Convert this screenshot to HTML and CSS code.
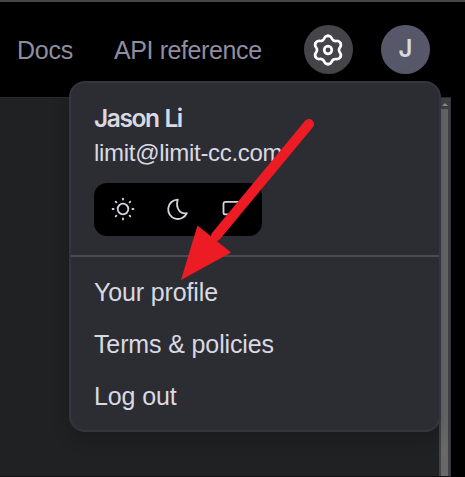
FILE: index.html
```html
<!DOCTYPE html>
<html lang="en">
<head>
<meta charset="utf-8">
<title>Account menu</title>
<link rel="stylesheet" href="styles.css">
</head>
<body>
<header class="topbar">
  <nav class="links">
    <a class="docs">Docs</a>
    <a class="api">API reference</a>
  </nav>
  <button class="round settings" aria-label="Settings">
    <svg width="33" height="34" viewBox="0 0 33 34" fill="none" stroke="#fff" stroke-width="2.7" stroke-linecap="round">
      <path id="tooth" d="M16 2.8C20.4 2.8 18.6 5.8 21.5 7.5C24.4 9.2 26.1 6.1 28.3 9.9"/>
      <use href="#tooth" transform="rotate(60 16 17)"/>
      <use href="#tooth" transform="rotate(120 16 17)"/>
      <use href="#tooth" transform="rotate(180 16 17)"/>
      <use href="#tooth" transform="rotate(240 16 17)"/>
      <use href="#tooth" transform="rotate(300 16 17)"/>
      <circle cx="16" cy="17" r="3.8"/>
    </svg>
  </button>
  <div class="round avatar">J</div>
</header>
<main class="panel">
  <div class="scrollbar"><span class="up"></span><span class="thumb"></span></div>
</main>
<section class="menu">
  <div class="account">
    <div class="name">Jason Li</div>
    <div class="email">limit@limit-cc.com</div>
    <div class="themes">
      <svg width="24" height="24" viewBox="0 0 24 24" fill="none" stroke="#d5d4e0" stroke-width="1.8" stroke-linecap="round">
        <circle cx="12" cy="12" r="5.3"/>
        <path d="M12 1.6v1M12 21.4v1M1.6 12h1M21.4 12h1M4.7 4.7l.7.7M18.6 18.6l.7.7M4.7 19.3l.7-.7M18.6 5.4l.7-.7"/>
      </svg>
      <svg width="24" height="24" viewBox="0 0 24 24" fill="none" stroke="#d5d4e0" stroke-width="1.8" stroke-linejoin="round">
        <path d="M11.8 2.6A9.7 9.7 0 1 0 20.8 16.1C15 17.6 9 12 11.8 2.6Z"/>
      </svg>
      <svg width="24" height="24" viewBox="0 0 24 24" fill="none" stroke="#d5d4e0" stroke-width="1.8" stroke-linecap="round">
        <path d="M19 4.8H4.5Q2.5 4.8 2.5 6.8V15.4Q2.5 17.4 4.5 17.4H10"/>
      </svg>
    </div>
  </div>
  <ul class="actions">
    <li class="profile">Your profile</li>
    <li class="terms">Terms &amp; policies</li>
    <li class="logout">Log out</li>
  </ul>
</section>
<svg class="arrow" width="140" height="166" viewBox="0 0 140 166">
  <path d="M129 9L36 121" stroke="#ed1c24" stroke-width="10" stroke-linecap="round"/>
  <path d="M1 165L17.5 110.5L51 137.5Z" fill="#ed1c24"/>
</svg>
</body>
</html>
```
FILE: styles.css
```css
* { box-sizing: border-box; }
body {
  margin: 0;
  width: 465px;
  height: 477px;
  overflow: hidden;
  position: relative;
  background: #000;
  font-family: "Liberation Sans", Arial, sans-serif;
  font-size: 25px;
  color: #d9d9e3;
}
.topbar {
  height: 97px;
  border-top: 2px solid #43464a;
  padding: 0 35px 0 17px;
  display: flex;
  align-items: center;
}
.links {
  display: flex;
  gap: 41px;
  color: #8e8ea0;
  flex: 1;
  padding-top: 2px;
  white-space: nowrap;
}
.docs { letter-spacing: -0.2px; width: 56px; }
.api { letter-spacing: -0.4px; }
.round {
  width: 49px;
  height: 49px;
  border: 0;
  padding: 0;
  border-radius: 50%;
  display: flex;
  align-items: center;
  justify-content: center;
}
.settings { background: #444449; margin-right: 28px; }
.avatar {
  background: #565869;
  font: 600 24px Inter, sans-serif;
  padding-bottom: 3px;
}
.panel {
  height: 380px;
  width: 451px;
  display: flex;
  justify-content: flex-end;
  background: #202123;
  border-top: 1px solid #292a2e;
  border-right: 1px solid #353540;
  border-bottom: 1px solid #111;
}
.scrollbar {
  width: 11px;
  background: #424242;
  display: flex;
  flex-direction: column;
  align-items: center;
}
.up {
  margin: 5px 0 3px;
  border: 3px solid transparent;
  border-top: 0;
  border-bottom-color: #929292;
}
.thumb { width: 7px; flex: 1; background: #686868; }
.menu {
  position: absolute;
  left: 69px;
  top: 81px;
  width: 372px;
  height: 351px;
  background: #2c2d32;
  border: 2px solid #343541;
  border-radius: 16px;
  box-shadow: 0 6px 18px rgba(0, 0, 0, .2);
}
.account {
  height: 174px;
  padding: 17px 23px 0;
  border-bottom: 2px solid #4b4b50;
}
.name {
  font: 600 24.5px/36px Inter, sans-serif;
  letter-spacing: -1.4px;
  word-spacing: 1px;
}
.email { font-size: 24px; line-height: 33px; letter-spacing: -0.3px; }
.themes {
  width: 168px;
  height: 53px;
  margin-top: 14px;
  padding: 0 17px 1px;
  display: flex;
  align-items: center;
  justify-content: space-between;
  background: #000;
  border-radius: 13px;
}
.actions { list-style: none; margin: 0; padding: 9px 23px; }
.actions li { height: 52px; line-height: 52px; letter-spacing: -0.13px; }
.arrow { position: absolute; left: 180px; top: 115px; }
```
